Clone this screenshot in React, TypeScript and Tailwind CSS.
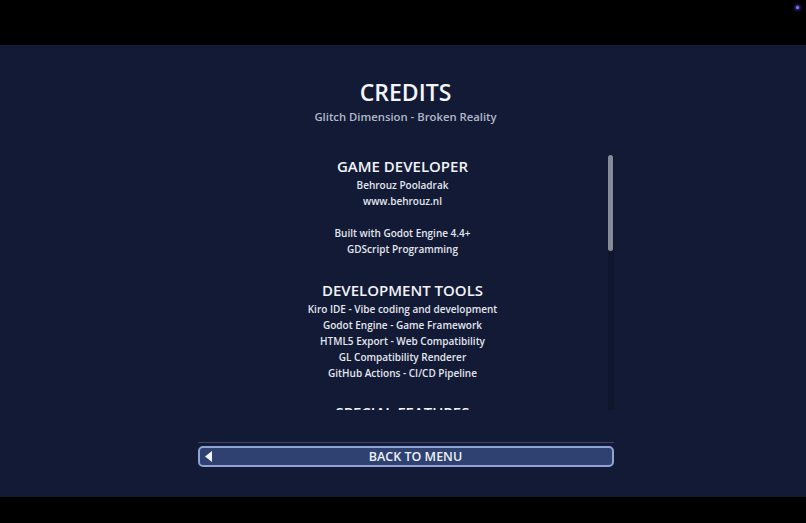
import React from "react";

const font = { fontFamily: '"Open Sans", "Noto Sans", sans-serif' };

function Section({ title, lines, gap }: { title: string; lines: string[]; gap: string }) {
  return (
    <div className={"flex flex-col items-center " + gap}>
      <div className="text-[15px] leading-[22px] font-semibold text-[#f2f3f7]">{title}</div>
      {lines.map((l, i) => (
        <div key={i} className="text-[10px] leading-[16px] h-[16px] font-semibold text-[#e4e6ee]">
          {l}
        </div>
      ))}
    </div>
  );
}

export default function App() {
  return (
    <div className="w-[806px] h-[523px] flex flex-col bg-black overflow-hidden" style={font}>
      <div className="h-[45px] relative bg-black">
        <div className="absolute left-[796px] top-[6px] w-[3px] h-[3px] rounded-full bg-[#7a7aff] shadow-[0_0_3px_1px_#4a4ad0]" />
      </div>
      <div className="h-[452px] bg-[#121a36] flex flex-col items-center pt-[32px] pl-[5px]">
        <div className="text-[23px] leading-[30px] font-semibold text-[#f4f5f9]">CREDITS</div>
        <div className="mt-[2px] text-[11.3px] leading-[16px] font-semibold text-[#b3b8c9]">
          Glitch Dimension - Broken Reality
        </div>
        <div className="mt-[30px] w-[416px] h-[255px] flex">
          <div className="flex-1 overflow-hidden">
            <Section
              gap="mt-0"
              title="GAME DEVELOPER"
              lines={["Behrouz Pooladrak", "www.behrouz.nl", "", "Built with Godot Engine 4.4+", "GDScript Programming"]}
            />
            <Section
              gap="mt-[22px]"
              title="DEVELOPMENT TOOLS"
              lines={[
                "Kiro IDE - Vibe coding and development",
                "Godot Engine - Game Framework",
                "HTML5 Export - Web Compatibility",
                "GL Compatibility Renderer",
                "GitHub Actions - CI/CD Pipeline",
              ]}
            />
            <Section gap="mt-[20px]" title="SPECIAL FEATURES" lines={["Glitch mechanics"]} />
          </div>
          <div className="w-[6px] flex justify-center bg-[#10172c]">
            <div className="w-[5px] h-[96px] rounded-[3px] bg-[#868b99]" />
          </div>
        </div>
        <div className="mt-[32px] w-[416px] h-px bg-[#3d4462]" />
        <div className="mt-[3px] w-[416px] h-[21px] rounded-[5px] border-2 border-[#8ea3d6] bg-[#2e4171] flex items-center">
          <div className="w-[20px] pl-[5px] flex justify-start">
            <svg width="7" height="11" viewBox="0 0 7 11">
              <path d="M7 0 L0 5.5 L7 11 Z" fill="#f2f4fa" />
            </svg>
          </div>
          <div className="flex-1 text-center text-[12.5px] leading-[16px] font-semibold text-[#eef0f6]">
            BACK TO MENU
          </div>
        </div>
      </div>
      <div className="flex-1 bg-black" />
    </div>
  );
}
